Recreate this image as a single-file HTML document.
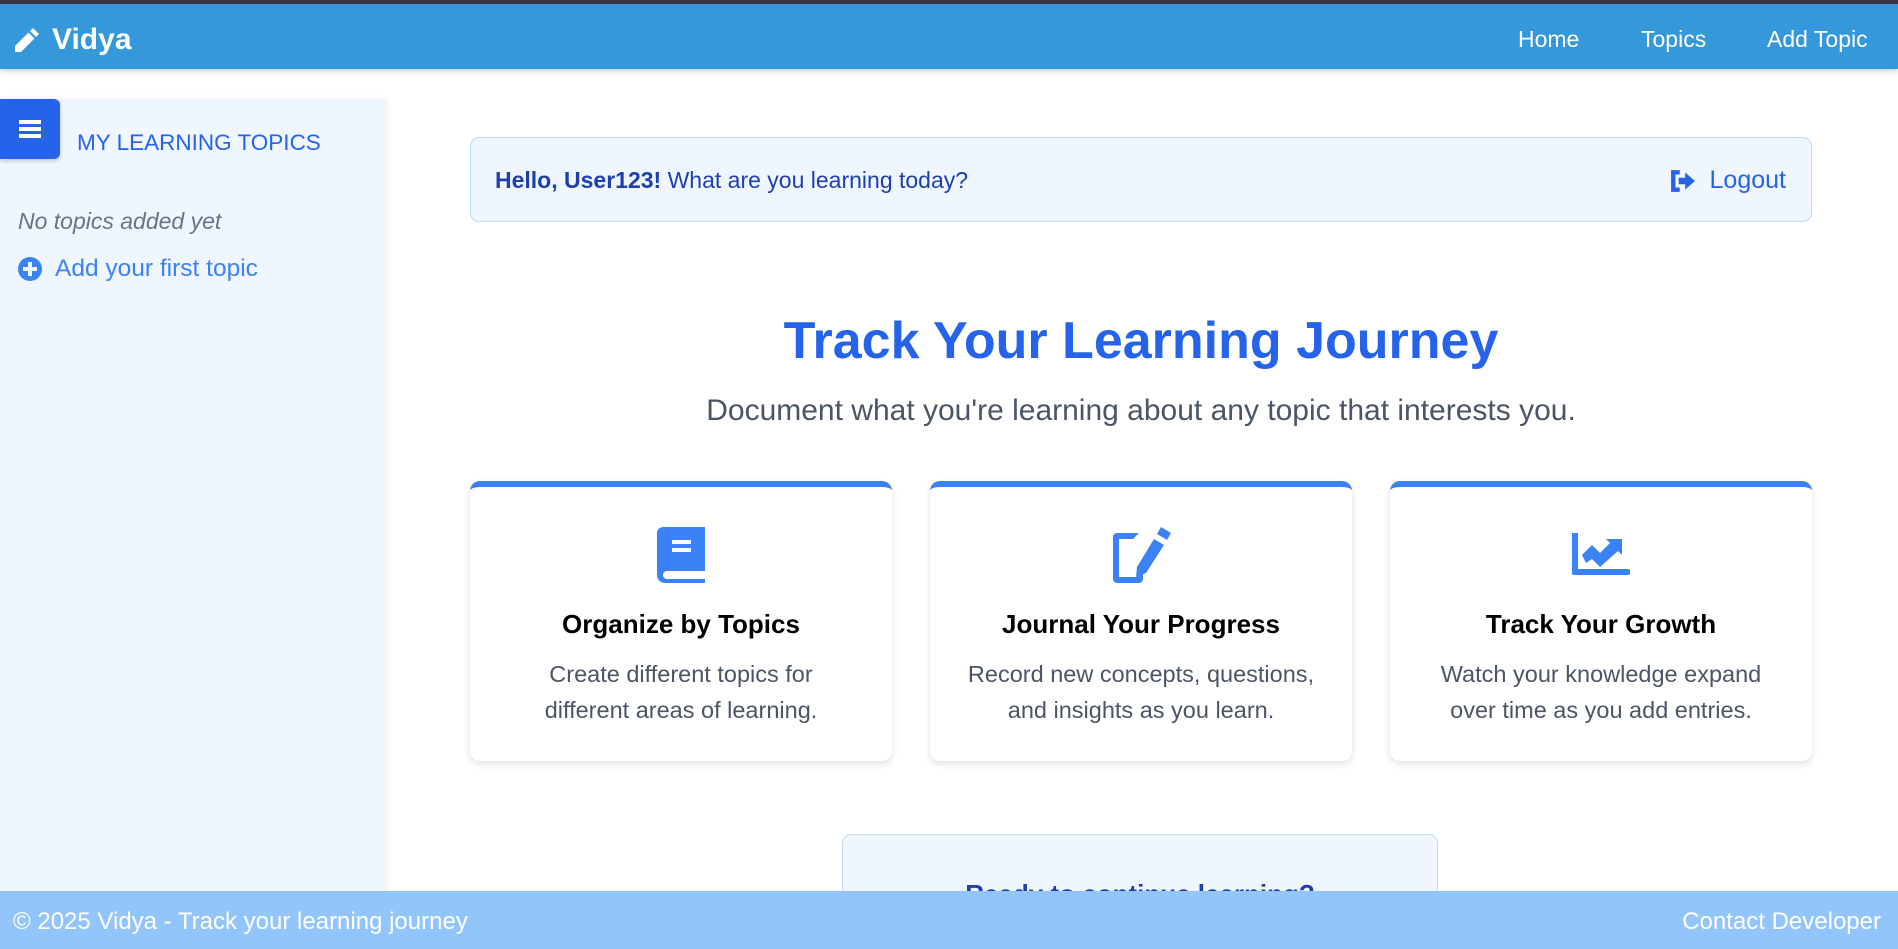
<!DOCTYPE html>
<html><head><meta charset="utf-8"><style>
*{box-sizing:border-box;margin:0;padding:0}
body{width:1898px;height:949px;overflow:hidden;background:#fff;font-family:"Liberation Sans",sans-serif;position:relative}
.topbar{position:absolute;left:0;top:0;width:1898px;height:4px;background:#3d3344}
.nav{position:absolute;left:0;top:4px;width:1898px;height:65px;background:#3498db;box-shadow:0 2px 6px rgba(0,0,0,.2);color:#fff}
.logo{position:absolute;left:12px;top:19px;font-weight:bold;font-size:30px;display:flex;align-items:center;gap:10px}
.nl{position:absolute;top:22px;font-size:23px}
.side{position:absolute;left:0;top:99px;width:386px;height:792px;background:#eff6ff;box-shadow:2px 0 6px rgba(0,0,0,.05)}
.ham{position:absolute;left:0;top:0;width:60px;height:60px;background:#2563eb;border-radius:0 6px 6px 0;box-shadow:0 2px 5px rgba(0,0,0,.2)}
.ham i{position:absolute;left:19px;width:22px;height:4px;background:#fff}
.greet{position:absolute;left:470px;top:137px;width:1342px;height:85px;background:#eff6ff;border:1px solid #bfdbfe;border-radius:9px;color:#1e40af;font-size:23px}
.card{position:absolute;top:481px;width:422px;height:280px;background:#fff;border-radius:10px;border-top:6px solid #3b82f6;box-shadow:0 3px 8px rgba(0,0,0,.12);text-align:center}
.card h3{position:absolute;top:122px;width:100%;font-size:26px;color:#000}
.card p{position:absolute;top:169px;width:100%;font-size:23.5px;line-height:36px;color:#4b5563}
.card svg{position:absolute;top:40px;left:50%;transform:translateX(-50%)}
.foot{position:absolute;left:0;top:891px;width:1898px;height:58px;background:#93c5fd;color:#fff;font-size:24px}
</style></head><body>
<div class="topbar"></div>
<div class="nav">
 <div class="logo"><svg width="30" height="30" viewBox="0 0 30 30"><path d="M21 3 L27 9 L24 12 L18 6 Z M16.5 7.5 L22.5 13.5 L9 27 L3 27 L3 21 Z" fill="#fff"/></svg>Vidya</div>
 <div class="nl" style="left:1518px">Home</div>
 <div class="nl" style="left:1641px">Topics</div>
 <div class="nl" style="left:1767px">Add Topic</div>
</div>
<div class="side">
 <div class="ham"><i style="top:21px"></i><i style="top:28px"></i><i style="top:35px"></i></div>
 <div style="position:absolute;left:77px;top:31px;font-size:22.5px;color:#2563eb">MY LEARNING TOPICS</div>
 <div style="position:absolute;left:18px;top:109px;font-size:23px;color:#6b7280;font-style:italic">No topics added yet</div>
 <div style="position:absolute;left:18px;top:156px;font-size:24.5px;color:#3b82f6;display:flex;align-items:center;gap:13px"><svg width="24" height="24" viewBox="0 0 24 24"><circle cx="12" cy="12" r="12" fill="#3b82f6"/><rect x="10" y="5" width="4" height="14" fill="#eff6ff"/><rect x="5" y="10" width="14" height="4" fill="#eff6ff"/></svg>Add your first topic</div>
</div>
<div class="greet">
 <div style="position:absolute;left:24px;top:29px"><b>Hello, User123!</b> What are you learning today?</div>
 <div style="position:absolute;right:25px;top:28px;color:#2563eb;font-size:25px;display:flex;align-items:center;gap:14px"><svg width="26" height="22" viewBox="0 0 24 20"><path d="M9 2 H3 V18 H9" fill="none" stroke="#2563eb" stroke-width="4"/><path d="M8 7 H14 V2 L23 10 L14 18 V13 H8 Z" fill="#2563eb"/></svg>Logout</div>
</div>
<div style="position:absolute;left:470px;width:1342px;top:311px;text-align:center;font-size:52px;font-weight:bold;color:#2563eb">Track Your Learning Journey</div>
<div style="position:absolute;left:470px;width:1342px;top:394px;text-align:center;font-size:30px;color:#4b5563">Document what you're learning about any topic that interests you.</div>
<div class="card" style="left:470px"><svg width="48" height="56" viewBox="0 0 48 56"><path d="M6 0 H48 V44 H10 A4 4 0 0 0 10 52 H48 V56 H8 A8 8 0 0 1 0 48 V6 A6 6 0 0 1 6 0 Z" fill="#3b82f6"/><rect x="15" y="13" width="19" height="4" fill="#fff"/><rect x="15" y="21" width="19" height="4" fill="#fff"/></svg><h3>Organize by Topics</h3><p>Create different topics for<br>different areas of learning.</p></div>
<div class="card" style="left:930px"><svg width="64" height="58" viewBox="0 0 64 58"><path d="M26 6 H4 A4 4 0 0 0 0 10 V52 A4 4 0 0 0 4 56 H26 A4 4 0 0 0 30 52 V34 L24 40 V50 H6 V12 H20 Z" fill="#3b82f6" transform="translate(4,0)"/><path d="M52 0 L62 6 L58 13 L48 7 Z M45 12 L55 18 L37 46 L27 50 L28 40 Z" fill="#3b82f6"/></svg><h3>Journal Your Progress</h3><p>Record new concepts, questions,<br>and insights as you learn.</p></div>
<div class="card" style="left:1390px"><svg width="58" height="44" viewBox="0 0 58 44" style="top:46px"><path d="M0 0 H6 V36 H56 A2 2 0 0 1 56 42 H2 A2 2 0 0 1 0 40 Z" fill="#3b82f6"/><path d="M10 22 L20 12 L28 20 L38 10 L34 6 H50 V22 L46 18 L28 34 L20 26 L14 30 Z" fill="#3b82f6"/></svg><h3>Track Your Growth</h3><p>Watch your knowledge expand<br>over time as you add entries.</p></div>
<div style="position:absolute;left:842px;top:834px;width:596px;height:80px;background:#eff6ff;border:1px solid #bfdbfe;border-radius:9px">
 <div style="position:absolute;top:44px;width:100%;text-align:center;font-size:26px;font-weight:bold;color:#1e40af">Ready to continue learning?</div>
</div>
<div class="foot">
 <div style="position:absolute;left:13px;top:17px">© 2025 Vidya - Track your learning journey</div>
 <div style="position:absolute;right:17px;top:17px">Contact Developer</div>
</div>
</body></html>
